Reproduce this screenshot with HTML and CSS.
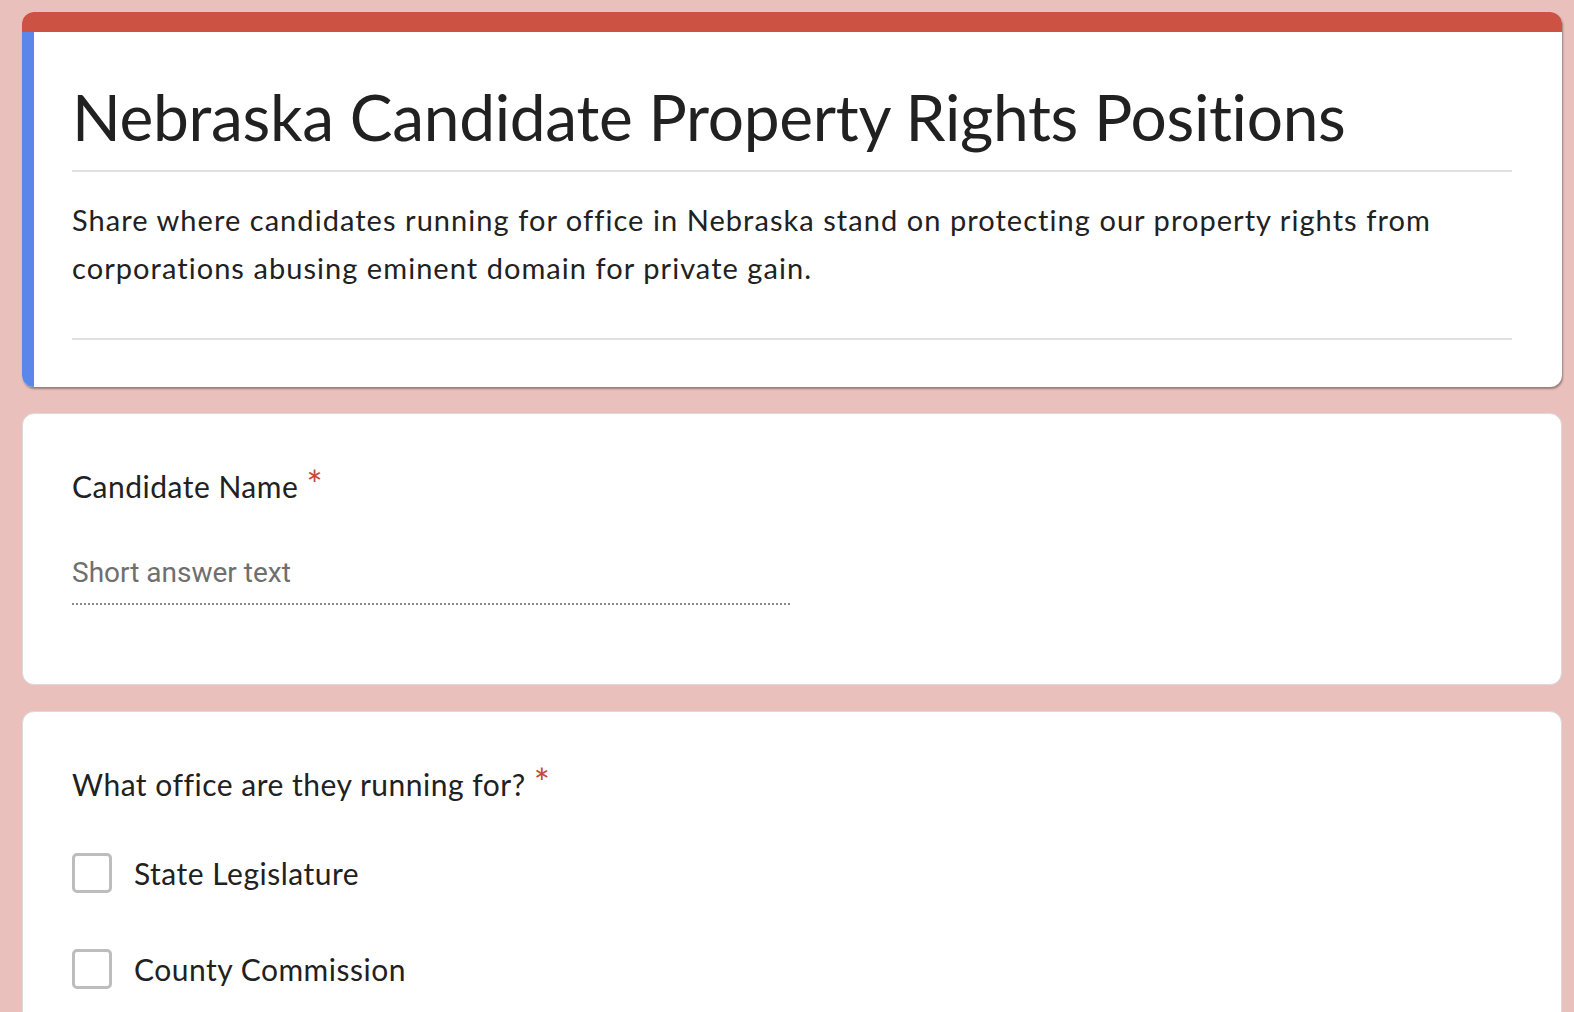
FILE: index.html
```html
<!DOCTYPE html>
<html lang="en">
<head>
  <meta charset="UTF-8" />
  <title>Nebraska Candidate Property Rights Positions</title>
  <link rel="stylesheet" href="styles.css">
</head>
<body>

  <div class="form-wrap">

    <div class="card header-card">
      <div class="header-accent"></div>
      <div class="header-body">
        <h1 class="form-title">Nebraska Candidate Property Rights Positions</h1>
        <p class="form-desc">Share where candidates running for office in Nebraska stand on protecting our property rights from corporations abusing eminent domain for private gain.</p>
      </div>
    </div>

    <div class="card question">
      <div class="q-title">Candidate Name <span class="req">*</span></div>
      <div class="short-answer">Short answer text</div>
    </div>

    <div class="card question">
      <div class="q-title">What office are they running for? <span class="req">*</span></div>
      <label class="option"><span class="box"></span>State Legislature</label>
      <label class="option"><span class="box"></span>County Commission</label>
    </div>

  </div>

</body>
</html>
```

FILE: styles.css
```css
body {
  margin: 0;
  background-color: #e9c0bb;
  font-family: 'Lato', 'Open Sans', sans-serif;
  color: #212121;
}

.form-wrap {
  padding: 12px 12px 0 22px;
  display: flex;
  flex-direction: column;
  gap: 26px;
}

.card {
  background: #fff;
  border-radius: 12px;
}

.header-card {
  overflow: hidden;
  box-shadow: 1px 2px 2px rgba(0, 0, 0, 0.35);
}

.header-accent {
  height: 20px;
  background-color: #cc5243;
}

.header-body {
  border-left: 12px solid #5a87e9;
  padding: 40px 50px 47px 38px;
}

.form-title {
  margin: 0;
  font-weight: 400;
  font-size: 64px;
  letter-spacing: -0.3px;
  line-height: 90px;
  padding-bottom: 8px;
  border-bottom: 2px solid #e0e0e0;
}

.form-desc {
  margin: 0;
  padding: 24px 0 46px;
  font-size: 29px;
  letter-spacing: 1.05px;
  line-height: 48px;
  border-bottom: 2px solid #e0e0e0;
}

.question {
  border: 1px solid #dadada;
  padding: 52px 48px 79px 49px;
}

.q-title {
  font-size: 30px;
  letter-spacing: 0.5px;
  line-height: 40px;
}

.req {
  color: #c5483b;
  vertical-align: top;
  font-size: 38px;
  line-height: 36px;
  letter-spacing: 0;
}

.short-answer {
  width: 718px;
  margin-top: 47px;
  padding-bottom: 10px;
  font-family: 'Roboto', sans-serif;
  font-size: 28px;
  line-height: 40px;
  color: #6f6f6f;
  border-bottom: 2px dotted #8a8a8a;
}

.option {
  display: flex;
  align-items: center;
  gap: 22px;
  margin-top: 49px;
  font-size: 30px;
  letter-spacing: 0.5px;
  line-height: 40px;
}

.option + .option {
  margin-top: 56px;
}

.box {
  width: 34px;
  height: 34px;
  border: 3px solid #bdbdbd;
  border-radius: 5px;
}
```
